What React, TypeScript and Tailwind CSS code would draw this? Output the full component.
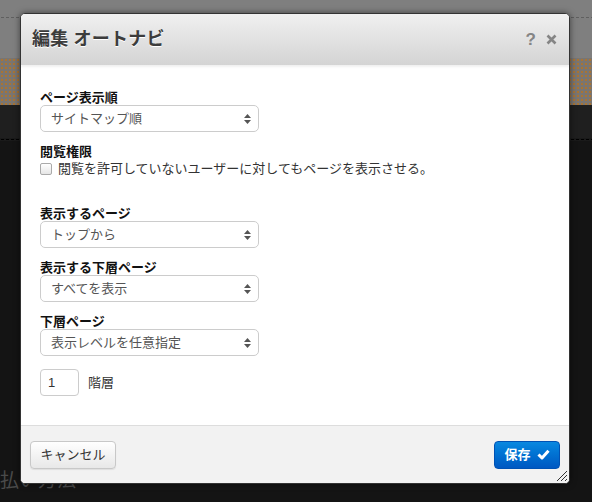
import React from "react";

const font = "font-['Liberation_Sans','Noto_Sans_CJK_JP',sans-serif]";

const SelectBox = ({ value }: { value: string }) => (
  <div className="relative w-[219px] h-[27px]">
    <select
      defaultValue={value}
      className={`${font} appearance-none w-full h-full pl-[10px] pr-6 text-[13px] text-[#555] bg-white border border-[#ccc] rounded-[5px] outline-none`}
    >
      <option>{value}</option>
    </select>
    <svg className="absolute right-[8px] top-[9px] pointer-events-none" width="7" height="10" viewBox="0 0 7 10">
      <path d="M3.5 0 L7 4 L0 4 Z M0 6 L7 6 L3.5 10 Z" fill="#555" />
    </svg>
  </div>
);

const Label = ({ children }: { children: React.ReactNode }) => (
  <div className="text-[13px] leading-[14px] font-bold text-[#111]">{children}</div>
);

const App = () => {
  return (
    <div className={`${font} relative w-[592px] h-[502px] overflow-hidden bg-[#141414]`}>
      {/* page behind the overlay */}
      <div className="flex flex-col">
        <div className="h-[58px] bg-[#7f7f7f] pt-[16px]">
          <div className="h-[3px] bg-[radial-gradient(#5f5f5f_1px,transparent_1.2px)] bg-[length:5px_3px]" />
        </div>
        <div className="h-[47px] bg-[#7a7570] bg-[radial-gradient(#a87434_0.9px,transparent_1.1px)] bg-[length:4px_4px]" />
        <div className="h-[33px] bg-[#1f1f1f]" />
        <div className="h-[3px] bg-[#1a1a1a] bg-[radial-gradient(#000_1px,transparent_1.2px)] bg-[length:5px_3px]" />
        <div className="h-[323px]" />
        <div className="text-[19px] leading-[30px] text-[#4a4a4a] font-['Noto_Sans_CJK_JP',sans-serif]">
          <div>払い方法</div>
          <div>ドメイン</div>
        </div>
      </div>

      {/* modal */}
      <div className="absolute left-[20px] top-[13px] w-[550px] h-[471px] flex flex-col rounded-[5px] border border-[#333] bg-white overflow-hidden shadow-[0_0_6px_rgba(0,0,0,0.5)]">
        <div className="h-[51px] shrink-0 flex items-center justify-between pl-[11px] pr-[12px] bg-gradient-to-b from-[#f0f0f0] to-[#d4d4d4] shadow-[0_2px_2px_rgba(0,0,0,0.06)]">
          <div className="text-[18px] font-bold text-[#3c3c3c] tracking-[0.2px] [text-shadow:0_1px_0_#fff]">編集 オートナビ</div>
          <div className="flex items-center gap-[10px] text-[#858585] font-bold">
            <span className="text-[17px] leading-none">?</span>
            <svg width="11" height="11" viewBox="0 0 11 11">
              <path d="M1.5 1.5 L9.5 9.5 M9.5 1.5 L1.5 9.5" stroke="#858585" strokeWidth="2.6" />
            </svg>
          </div>
        </div>

        <div className="flex-1 px-[19px] pt-[26px] flex flex-col">
          <Label>ページ表示順</Label>
          <SelectBox value="サイトマップ順" />

          <div className="mt-[13px]">
            <Label>閲覧権限</Label>
            <label className="flex items-center gap-[6px] mt-[1px] text-[13px] leading-[17px] text-[#333]">
              <span className="w-[12px] h-[12px] rounded-[2px] border border-[#aaa] bg-gradient-to-b from-white to-[#e6e6e6]" />
              閲覧を許可していないユーザーに対してもページを表示させる。
            </label>
          </div>

          <div className="mt-[30px]">
            <Label>表示するページ</Label>
            <SelectBox value="トップから" />
          </div>

          <div className="mt-[13px]">
            <Label>表示する下層ページ</Label>
            <SelectBox value="すべてを表示" />
          </div>

          <div className="mt-[13px]">
            <Label>下層ページ</Label>
            <SelectBox value="表示レベルを任意指定" />
          </div>

          <div className="mt-[13px] flex items-center gap-[9px]">
            <input
              defaultValue="1"
              className={`${font} w-[39px] h-[27px] pl-[7px] text-[13px] text-[#333] border border-[#ccc] rounded-[4px] outline-none`}
            />
            <span className="text-[13px] text-[#333]">階層</span>
          </div>
        </div>

        <div className="relative h-[58px] shrink-0 border-t border-[#ddd] bg-[#f2f2f2] flex items-center justify-between px-[9px]">
          <button className="h-[28px] w-[86px] text-[13px] text-[#333] rounded-[4px] border border-[#c8c8c8] bg-gradient-to-b from-white to-[#e8e8e8] shadow-[0_1px_1px_rgba(0,0,0,0.08)]">
            キャンセル
          </button>
          <button className="h-[28px] w-[66px] flex items-center justify-center gap-[6px] text-[13px] font-bold text-white rounded-[4px] border border-[#0052b4] bg-gradient-to-b from-[#0a88e0] to-[#0058c2]">
            保存
            <svg width="13" height="11" viewBox="0 0 13 11">
              <path d="M1.5 5.5 L5 9 L11.5 1.8" stroke="#fff" strokeWidth="3" fill="none" strokeLinejoin="round" />
            </svg>
          </button>
          <svg className="absolute right-[1px] bottom-[1px]" width="12" height="12" viewBox="0 0 12 12">
            <path d="M11 1 L1 11 M11 5 L5 11 M11 9 L9 11" stroke="#333" strokeWidth="1" />
          </svg>
        </div>
      </div>
    </div>
  );
};

export default App;
